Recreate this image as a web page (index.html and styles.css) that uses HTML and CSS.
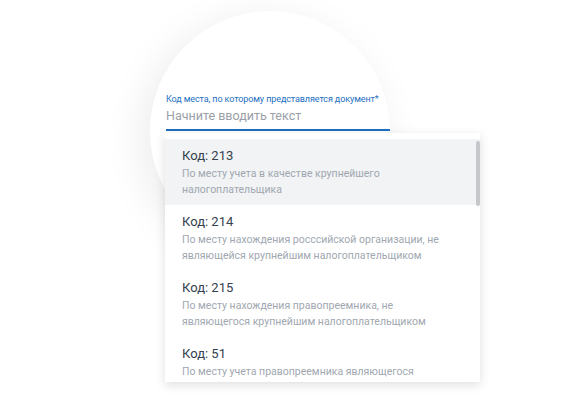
FILE: index.html
```html
<!DOCTYPE html>
<html>
<head>
    <meta charset="utf-8">
    <title>Код места</title>
    <link rel="stylesheet" href="styles.css">
</head>
<body>
    <div class="stage">
        <div class="lens">
            <div class="field">
                <label class="field-label">Код места, по которому представляется документ*</label>
                <div class="field-input">Начните вводить текст</div>
            </div>
        </div>

        <div class="dropdown">
            <ul class="options">
                <li class="option active">
                    <div class="option-title">Код: 213</div>
                    <div class="option-desc">По месту учета в качестве крупнейшего<br>налогоплательщика</div>
                </li>
                <li class="option">
                    <div class="option-title">Код: 214</div>
                    <div class="option-desc">По месту нахождения росссийской организации, не<br>являющейся крупнейшим налогоплательщиком</div>
                </li>
                <li class="option">
                    <div class="option-title">Код: 215</div>
                    <div class="option-desc">По месту нахождения правопреемника, не<br>являющегося крупнейшим налогоплательщиком</div>
                </li>
                <li class="option">
                    <div class="option-title">Код: 51</div>
                    <div class="option-desc">По месту учета правопреемника являющегося</div>
                </li>
            </ul>
            <div class="scroll-thumb"></div>
        </div>
    </div>
</body>
</html>
```

FILE: styles.css
```css
body {
    margin: 0;
    background: #ffffff;
    font-family: Roboto, 'Liberation Sans', Arial, sans-serif;
}
.stage {
    position: relative;
    width: 573px;
    height: 396px;
    padding-top: 11px;
    box-sizing: border-box;
}
.lens {
    width: 240px;
    height: 240px;
    margin-left: 150px;
    border-radius: 50%;
    background: #ffffff;
    box-shadow: -8px 8px 40px rgba(0,0,0,0.08);
    overflow: hidden;
    box-sizing: border-box;
    padding: 82px 0 0 16px;
}
.field {
    width: 300px;
    display: flex;
    flex-direction: column;
}
.field-label {
    font-size: 9px;
    line-height: 12px;
    color: #1d6fbf;
    letter-spacing: -0.1px;
}
.field-input {
    margin-top: 3px;
    font-size: 12.5px;
    line-height: 16px;
    color: #9aa0a8;
    padding-bottom: 5px;
    border-bottom: 2px solid #1d6fbf;
}
.dropdown {
    position: absolute;
    left: 165px;
    top: 133px;
    width: 315px;
    height: 249px;
    background: #ffffff;
    box-shadow: 0 3px 10px rgba(0,0,0,0.13);
    overflow: hidden;
}
.options {
    list-style: none;
    margin: 0;
    padding: 6px 0 0;
}
.option {
    height: 66px;
    box-sizing: border-box;
    padding: 7px 20px 0 17px;
}
.option.active {
    background: #f1f3f5;
}
.option-title {
    font-size: 13px;
    line-height: 20px;
    color: #34414f;
}
.option-desc {
    font-size: 10.5px;
    line-height: 16px;
    color: #a0a7b0;
    white-space: nowrap;
}
.scroll-thumb {
    position: absolute;
    right: 0;
    top: 8px;
    width: 4px;
    height: 65px;
    border-radius: 2px;
    background: #c5c7ca;
}
```
